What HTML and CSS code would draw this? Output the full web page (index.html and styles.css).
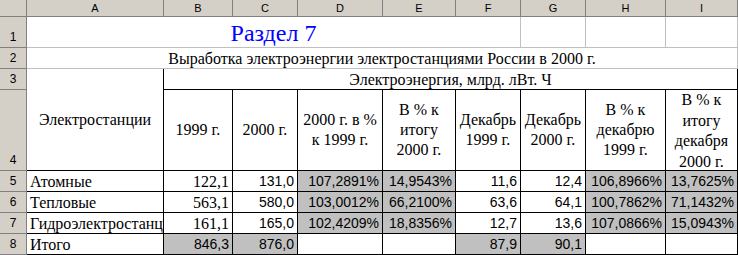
FILE: index.html
```html
<!DOCTYPE html>
<html lang="ru">
<head>
<meta charset="utf-8">
<title>Раздел 7</title>
<link rel="stylesheet" href="styles.css">
</head>
<body>
<div class="sheet">
  <div class="hd"></div>
  <div class="hd">A</div>
  <div class="hd">B</div>
  <div class="hd">C</div>
  <div class="hd">D</div>
  <div class="hd">E</div>
  <div class="hd">F</div>
  <div class="hd">G</div>
  <div class="hd">H</div>
  <div class="hd">I</div>

  <div class="rh">1</div>
  <div class="title span-a-f">Раздел 7</div>
  <div></div>
  <div></div>
  <div></div>

  <div class="rh">2</div>
  <div class="subtitle span-a-i">Выработка электроэнергии электростанциями России в 2000 г.</div>

  <div class="rh">3</div>
  <div class="bk mid stations">Электростанции</div>
  <div class="bk ctr span-b-i">Электроэнергия, млрд. лВт. Ч</div>

  <div class="rh">4</div>
  <div class="bk mid">1999 г.</div>
  <div class="bk mid">2000 г.</div>
  <div class="bk mid">2000 г. в %<br>к 1999 г.</div>
  <div class="bk mid">В % к<br>итогу<br>2000 г.</div>
  <div class="bk mid">Декабрь<br>1999 г.</div>
  <div class="bk mid">Декабрь<br>2000 г.</div>
  <div class="bk mid">В % к<br>декабрю<br>1999 г.</div>
  <div class="bk mid tall">В % к<br>итогу<br>декабря<br>2000 г.</div>

  <div class="rh">5</div>
  <div class="bk lft">Атомные</div>
  <div class="bk rgt">122,1</div>
  <div class="bk rgt sans">131,0</div>
  <div class="bk rgt sans fill">107,2891%</div>
  <div class="bk rgt sans fill">14,9543%</div>
  <div class="bk rgt sans">11,6</div>
  <div class="bk rgt sans">12,4</div>
  <div class="bk rgt sans fill">106,8966%</div>
  <div class="bk rgt sans fill">13,7625%</div>

  <div class="rh">6</div>
  <div class="bk lft">Тепловые</div>
  <div class="bk rgt">563,1</div>
  <div class="bk rgt sans">580,0</div>
  <div class="bk rgt sans fill">103,0012%</div>
  <div class="bk rgt sans fill">66,2100%</div>
  <div class="bk rgt sans">63,6</div>
  <div class="bk rgt sans">64,1</div>
  <div class="bk rgt sans fill">100,7862%</div>
  <div class="bk rgt sans fill">71,1432%</div>

  <div class="rh">7</div>
  <div class="bk lft">Гидроэлектростанц</div>
  <div class="bk rgt">161,1</div>
  <div class="bk rgt sans">165,0</div>
  <div class="bk rgt sans fill">102,4209%</div>
  <div class="bk rgt sans fill">18,8356%</div>
  <div class="bk rgt sans">12,7</div>
  <div class="bk rgt sans">13,6</div>
  <div class="bk rgt sans fill">107,0866%</div>
  <div class="bk rgt sans fill">15,0943%</div>

  <div class="rh">8</div>
  <div class="bk lft">Итого</div>
  <div class="bk rgt sans fill">846,3</div>
  <div class="bk rgt sans fill">876,0</div>
  <div class="bk"></div>
  <div class="bk"></div>
  <div class="bk rgt sans fill">87,9</div>
  <div class="bk rgt sans fill">90,1</div>
  <div class="bk"></div>
  <div class="bk"></div>
</div>
</body>
</html>
```

FILE: styles.css
```css
html, body {
  margin: 0;
  padding: 0;
  background: #ffffff;
}

.sheet {
  display: grid;
  grid-template-columns: 27px 137px 69px 65px 85px 73px 65px 65px 80px 72px;
  grid-template-rows: 17px 31px 21px 21px 81px 21px 21px 21px 21px;
  width: 738px;
  font-family: "Liberation Serif", "Times New Roman", serif;
  font-size: 16px;
  color: #000000;
}

.sheet > div {
  box-sizing: border-box;
  border-right: 1px solid #c0c0c0;
  border-bottom: 1px solid #c0c0c0;
  overflow: hidden;
  white-space: nowrap;
  display: flex;
  align-items: flex-end;
  line-height: 19px;
}

.sheet .hd {
  background: #d4d0c8;
  border-color: #808080;
  font-family: "Liberation Sans", Arial, sans-serif;
  font-size: 11px;
  line-height: 13px;
  justify-content: center;
  align-items: flex-start;
  padding-top: 2px;
}

.sheet .rh {
  background: #d4d0c8;
  border-color: #808080;
  font-family: "Liberation Sans", Arial, sans-serif;
  font-size: 12px;
  justify-content: center;
}

.sheet .title {
  color: #0000ff;
  font-size: 24px;
  line-height: 27px;
  justify-content: center;
}

.span-a-f {
  grid-column: span 6;
}

.span-a-i {
  grid-column: span 9;
}

.span-b-i {
  grid-column: span 8;
}

.sheet .subtitle {
  justify-content: center;
  line-height: 18px;
}

.sheet .bk {
  border-color: #000000;
}

.sheet .stations {
  grid-row: span 2;
}

.sheet .ctr {
  justify-content: center;
}

.sheet .mid {
  justify-content: center;
  align-items: center;
  text-align: center;
  line-height: 20px;
  white-space: normal;
}

.sheet .tall {
  line-height: 20.5px;
  padding-top: 2px;
}

.sheet .lft {
  justify-content: flex-start;
  padding-left: 3px;
}

.sheet .rgt {
  justify-content: flex-end;
  padding-right: 3px;
}

.sheet .sans {
  font-family: "Liberation Sans", Arial, sans-serif;
  font-size: 14px;
}

.sheet .fill {
  background: #c0c0c0;
}
```
